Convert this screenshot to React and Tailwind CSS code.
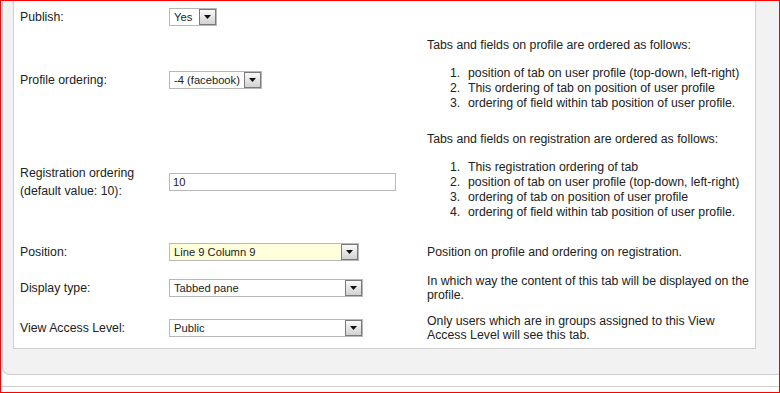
const font = { fontFamily: '"Liberation Sans", Arial, sans-serif' };

const Arrow = () => (
  <div className="flex h-full w-[17px] shrink-0 items-end justify-center border border-[#7a7a7a] bg-gradient-to-b from-[#fafafa] to-[#d2d2d2] pb-[5px]">
    <svg width="7" height="4" viewBox="0 0 7 4">
      <polygon points="0,0 7,0 3.5,4" fill="#111" />
    </svg>
  </div>
);

const Select = ({ value, width, highlight }) => (
  <div
    className={`flex h-[18px] items-center border border-[#b8b8b8] ${highlight ? "bg-[#ffffdc]" : "bg-white"}`}
    style={{ width }}
  >
    <span className="flex-1 truncate pl-[4px] text-[11.2px] leading-[16px] text-[#222]">{value}</span>
    <Arrow />
  </div>
);

const Row = ({ label, field, desc, height }) => (
  <div className="flex items-center" style={{ height }}>
    <div className="w-[149px] shrink-0 text-[12.3px] leading-[18px] text-[#222]">{label}</div>
    <div className="w-[258px] shrink-0">{field}</div>
    <div className="w-[327px] shrink-0 text-[12.3px] text-[#222]">{desc}</div>
  </div>
);

const OrderList = ({ title, items }) => (
  <div className="leading-[15px]">
    <div>{title}</div>
    <ol className="mt-[13px] mb-[12px] pl-[23px]">
      {items.map((item, i) => (
        <li key={item} className="flex">
          <span className="w-[18px] shrink-0">{i + 1}.</span>
          <span>{item}</span>
        </li>
      ))}
    </ol>
  </div>
);

export default function App() {
  return (
    <div className="flex h-[393px] w-[780px] flex-col overflow-hidden border border-[#ff0000] bg-white" style={font}>
      <div className="ml-[1px] h-[374px] shrink-0 rounded-bl-[8px] border-b border-l border-[#cccccc] bg-[#f2f2f2] pb-[25px] pl-[10px]">
        <div className="h-[348px] w-[743px] border-x border-b border-[#d0d0d0] bg-white pl-[6px]">
          <Row height={32} label="Publish:" field={<Select value="Yes" width={48} />} desc={null} />
          <Row
            height={94}
            label="Profile ordering:"
            field={<Select value="-4 (facebook)" width={93} />}
            desc={
              <OrderList
                title="Tabs and fields on profile are ordered as follows:"
                items={[
                  "position of tab on user profile (top-down, left-right)",
                  "This ordering of tab on position of user profile",
                  "ordering of field within tab position of user profile.",
                ]}
              />
            }
          />
          <Row
            height={110}
            label={
              <>
                Registration ordering
                <br />
                (default value: 10):
              </>
            }
            field={
              <div className="flex h-[18px] w-[227px] items-center border border-[#b8b8b8] bg-white pl-[3px] text-[11.2px] text-[#222]">
                10
              </div>
            }
            desc={
              <OrderList
                title="Tabs and fields on registration are ordered as follows:"
                items={[
                  "This registration ordering of tab",
                  "position of tab on user profile (top-down, left-right)",
                  "ordering of tab on position of user profile",
                  "ordering of field within tab position of user profile.",
                ]}
              />
            }
          />
          <Row
            height={30}
            label="Position:"
            field={<Select value="Line 9 Column 9" width={190} highlight />}
            desc={<div className="leading-[15px]">Position on profile and ordering on registration.</div>}
          />
          <Row
            height={42}
            label="Display type:"
            field={<Select value="Tabbed pane" width={194} />}
            desc={<div className="leading-[14px]">In which way the content of this tab will be displayed on the profile.</div>}
          />
          <Row
            height={38}
            label="View Access Level:"
            field={<Select value="Public" width={194} />}
            desc={<div className="leading-[14px]">Only users which are in groups assigned to this View Access Level will see this tab.</div>}
          />
        </div>
      </div>
      <div className="h-[12px] shrink-0 border-b border-[#cccccc]" />
    </div>
  );
}
